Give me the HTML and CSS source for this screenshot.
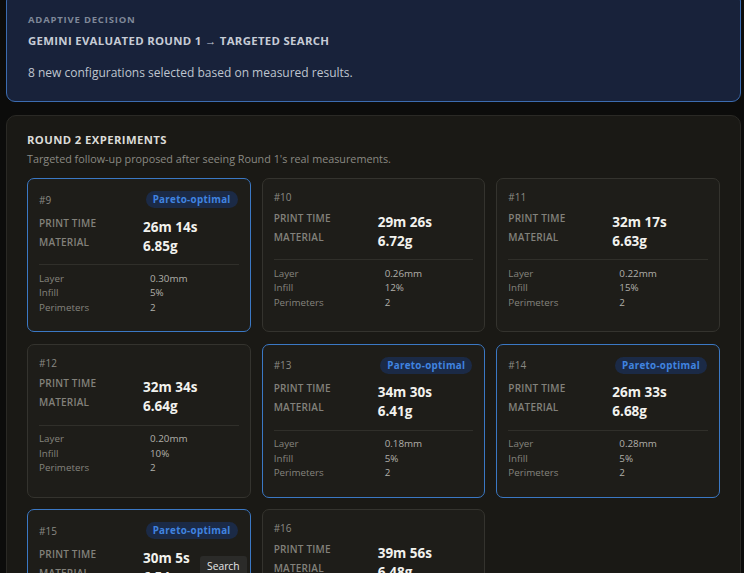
FILE: index.html
```html
<!DOCTYPE html>
<html lang="en">
<head>
<meta charset="utf-8">
<title>Round 2 Experiments</title>
<link rel="stylesheet" href="styles.css">
</head>
<body>
<main class="page">
  <section class="decision">
    <div class="eyebrow">Adaptive decision</div>
    <h2 class="decision-title">Gemini evaluated Round 1 → Targeted search</h2>
    <p class="decision-text">8 new configurations selected based on measured results.</p>
  </section>

  <section class="round">
    <h3 class="round-title">Round 2 experiments</h3>
    <p class="round-sub">Targeted follow-up proposed after seeing Round 1's real measurements.</p>

    <div class="grid">
      <article class="card pareto">
        <header class="card-head"><span class="run-id">#9</span><span class="badge">Pareto-optimal</span></header>
        <div class="metrics">
          <div class="metric-labels"><span>Print time</span><span>Material</span></div>
          <div class="metric-values"><span>26m 14s</span><span>6.85g</span></div>
        </div>
        <dl class="details"><dt>Layer</dt><dd>0.30mm</dd><dt>Infill</dt><dd>5%</dd><dt>Perimeters</dt><dd>2</dd></dl>
      </article>
      <article class="card">
        <header class="card-head"><span class="run-id">#10</span></header>
        <div class="metrics">
          <div class="metric-labels"><span>Print time</span><span>Material</span></div>
          <div class="metric-values"><span>29m 26s</span><span>6.72g</span></div>
        </div>
        <dl class="details"><dt>Layer</dt><dd>0.26mm</dd><dt>Infill</dt><dd>12%</dd><dt>Perimeters</dt><dd>2</dd></dl>
      </article>
      <article class="card">
        <header class="card-head"><span class="run-id">#11</span></header>
        <div class="metrics">
          <div class="metric-labels"><span>Print time</span><span>Material</span></div>
          <div class="metric-values"><span>32m 17s</span><span>6.63g</span></div>
        </div>
        <dl class="details"><dt>Layer</dt><dd>0.22mm</dd><dt>Infill</dt><dd>15%</dd><dt>Perimeters</dt><dd>2</dd></dl>
      </article>

      <article class="card">
        <header class="card-head"><span class="run-id">#12</span></header>
        <div class="metrics">
          <div class="metric-labels"><span>Print time</span><span>Material</span></div>
          <div class="metric-values"><span>32m 34s</span><span>6.64g</span></div>
        </div>
        <dl class="details"><dt>Layer</dt><dd>0.20mm</dd><dt>Infill</dt><dd>10%</dd><dt>Perimeters</dt><dd>2</dd></dl>
      </article>
      <article class="card pareto">
        <header class="card-head"><span class="run-id">#13</span><span class="badge">Pareto-optimal</span></header>
        <div class="metrics">
          <div class="metric-labels"><span>Print time</span><span>Material</span></div>
          <div class="metric-values"><span>34m 30s</span><span>6.41g</span></div>
        </div>
        <dl class="details"><dt>Layer</dt><dd>0.18mm</dd><dt>Infill</dt><dd>5%</dd><dt>Perimeters</dt><dd>2</dd></dl>
      </article>
      <article class="card pareto">
        <header class="card-head"><span class="run-id">#14</span><span class="badge">Pareto-optimal</span></header>
        <div class="metrics">
          <div class="metric-labels"><span>Print time</span><span>Material</span></div>
          <div class="metric-values"><span>26m 33s</span><span>6.68g</span></div>
        </div>
        <dl class="details"><dt>Layer</dt><dd>0.28mm</dd><dt>Infill</dt><dd>5%</dd><dt>Perimeters</dt><dd>2</dd></dl>
      </article>

      <article class="card pareto">
        <header class="card-head"><span class="run-id">#15</span><span class="badge">Pareto-optimal</span></header>
        <div class="metrics">
          <div class="metric-labels"><span>Print time</span><span>Material</span></div>
          <div class="metric-values"><span>30m 5s</span><span>6.54g</span></div>
        </div>
        <dl class="details"><dt>Layer</dt><dd>0.24mm</dd><dt>Infill</dt><dd>5%</dd><dt>Perimeters</dt><dd>2</dd></dl>
        <span class="tooltip">Search</span>
      </article>
      <article class="card">
        <header class="card-head"><span class="run-id">#16</span></header>
        <div class="metrics">
          <div class="metric-labels"><span>Print time</span><span>Material</span></div>
          <div class="metric-values"><span>39m 56s</span><span>6.48g</span></div>
        </div>
        <dl class="details"><dt>Layer</dt><dd>0.16mm</dd><dt>Infill</dt><dd>10%</dd><dt>Perimeters</dt><dd>3</dd></dl>
      </article>
    </div>
  </section>
</main>
</body>
</html>
```

FILE: styles.css
```css
* {
  box-sizing: border-box;
}

html, body {
  margin: 0;
  padding: 0;
  background: #0c0c0b;
  overflow: hidden;
}

body {
  font-family: "Open Sans", "Noto Sans", sans-serif;
  color: #c8c8c4;
}

.page {
  display: flex;
  flex-direction: column;
  gap: 13px;
  padding: 0 3px 40px 6px;
  margin-top: -8px;
}

/* Blue decision banner */
.decision {
  background: #18223a;
  border: 1px solid #3c6cb0;
  border-radius: 9px;
  padding: 20px 21px 19px;
}

.eyebrow {
  font-size: 9.5px;
  font-weight: 700;
  letter-spacing: 0.8px;
  text-transform: uppercase;
  color: #7f8898;
  line-height: 14px;
}

.decision-title {
  margin: 5px 0 0;
  font-size: 11.4px;
  font-weight: 700;
  letter-spacing: 0.3px;
  text-transform: uppercase;
  color: #c6ccd6;
  line-height: 17px;
}

.decision-text {
  margin: 15px 0 0;
  font-size: 12px;
  color: #bfc5cf;
  line-height: 18px;
}

/* Round panel */
.round {
  background: #1a1915;
  border: 1px solid #2a2925;
  border-radius: 10px;
  padding: 15px 20px 20px;
}

.round-title {
  margin: 0;
  font-size: 11.3px;
  font-weight: 700;
  letter-spacing: 0.4px;
  text-transform: uppercase;
  color: #dcdcd8;
  line-height: 17px;
}

.round-sub {
  margin: 3px 0 0;
  font-size: 10.8px;
  color: #8a8983;
  line-height: 16px;
}

.grid {
  margin-top: 11px;
  display: grid;
  grid-template-columns: repeat(3, 1fr);
  column-gap: 11px;
  row-gap: 11.5px;
}

.card {
  position: relative;
  display: flex;
  flex-direction: column;
  background: #1e1d19;
  border: 1px solid #34332e;
  border-radius: 7px;
  padding: 12px 11px 16px;
}

.card.pareto {
  border-color: #3b78c4;
}

.card-head {
  display: flex;
  justify-content: space-between;
  align-items: center;
}

.run-id {
  font-size: 10px;
  color: #8a8983;
  line-height: 12px;
}

.badge {
  background: #1b2a46;
  color: #4084e0;
  font-size: 9.8px;
  font-weight: 700;
  letter-spacing: 0.3px;
  line-height: 17px;
  padding: 0 7px;
  border-radius: 9px;
  margin-right: 1px;
}

/* Print time / material: values sit a little below their labels */
.metrics {
  margin-top: 5.5px;
  display: grid;
  grid-template-columns: 104px 1fr;
}

.metric-labels,
.metric-values {
  display: flex;
  flex-direction: column;
}

.metric-labels span {
  font-size: 10px;
  font-weight: 600;
  text-transform: uppercase;
  letter-spacing: 0.2px;
  color: #82817b;
  line-height: 19.3px;
}

.metric-values {
  padding-top: 4px;
}

.metric-values span {
  font-size: 13.5px;
  font-weight: 700;
  color: #f2f2ee;
  line-height: 19.3px;
}

.details {
  margin: 8px 0 0;
  padding-top: 6.5px;
  border-top: 1px solid #302f2a;
  display: grid;
  grid-template-columns: 111px 1fr;
  font-size: 9.8px;
  line-height: 14.5px;
}

.details dt {
  color: #85847e;
}

.details dd {
  margin: 0;
  color: #b0afa9;
}

/* Hover tooltip over the #15 card */
.tooltip {
  position: absolute;
  left: 172px;
  top: 46px;
  background: #2b2b29;
  color: #e8e8e8;
  font-size: 10.3px;
  line-height: 16px;
  padding: 2px 7px 4px;
  border-radius: 3px;
}
```
